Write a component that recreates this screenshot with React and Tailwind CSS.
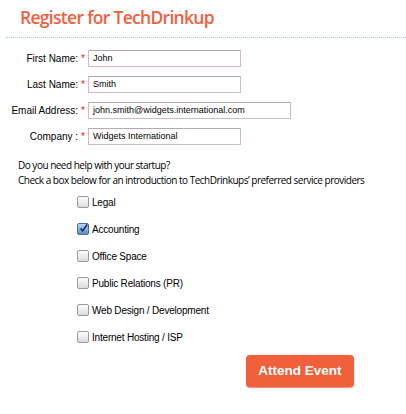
import React from "react";

const fields = [
  { label: "First Name:", value: "John", wide: false },
  { label: "Last Name:", value: "Smith", wide: false },
  { label: "Email Address:", value: "john.smith@widgets.international.com", wide: true },
  { label: "Company :", value: "Widgets International", wide: false },
];

const services = [
  { name: "Legal", checked: false },
  { name: "Accounting", checked: true },
  { name: "Office Space", checked: false },
  { name: "Public Relations (PR)", checked: false },
  { name: "Web Design / Development", checked: false },
  { name: "Internet Hosting / ISP", checked: false },
];

const Box = ({ checked }) => (
  <span
    className={`w-[12px] h-[12px] rounded-[2px] border flex items-center justify-center ${
      checked
        ? "border-[#4a6fa5] bg-gradient-to-b from-[#b9d3f0] to-[#5a8fd0]"
        : "border-[#9a9a9a] bg-gradient-to-b from-[#fdfdfd] to-[#dcdcdc]"
    }`}
  >
    {checked && (
      <svg width="11" height="11" viewBox="0 0 11 11" className="-mt-[2px] ml-[1px]">
        <path d="M2 5.5 L4.5 8.5 L10 0.5" fill="none" stroke="#1a2a4a" strokeWidth="2" />
      </svg>
    )}
  </span>
);

export default function App() {
  return (
    <div className="w-[406px] h-[414px] bg-white font-['Liberation_Sans',Arial,sans-serif] text-black">
      {/* header */}
      <div className="pl-[20px] pt-[4px] h-[37px]">
        <h1 className="font-['Open_Sans',sans-serif] text-[17.5px] font-semibold text-[#f0603f] tracking-[-0.7px] leading-[26px]">
          Register for TechDrinkup
        </h1>
      </div>
      <div className="ml-[6px] border-t border-dotted border-[#9ed6e8]"></div>

      {/* form */}
      <div className="mt-[12px] flex flex-col gap-[9px]">
        {fields.map((f) => (
          <div key={f.label} className="flex items-center h-[17px]">
            <div className="w-[88px] flex justify-end pr-[3px] text-[10px]">
              <span>{f.label}</span>
              <span className="text-[#e02020] ml-[3px]">*</span>
            </div>
            <div
              className={`h-[17px] border border-[#d8b8c0] border-t-[#b8a8b0] px-[4px] flex items-center text-[9px] ${
                f.wide ? "w-[203px]" : "w-[153px]"
              }`}
            >
              {f.value}
            </div>
          </div>
        ))}
      </div>

      {/* intro */}
      <div className="mt-[13px] pl-[18px] font-['Open_Sans',sans-serif] text-[10px] leading-[15px] tracking-[-0.5px]">
        <p>Do you need help with your startup?</p>
        <p>Check a box below for an introduction to TechDrinkups’ preferred service providers</p>
      </div>

      {/* services */}
      <div className="mt-[8px] pl-[77px] flex flex-col gap-[15px]">
        {services.map((s) => (
          <div key={s.name} className="flex items-center gap-[3px] h-[12px] text-[10px] tracking-[-0.2px]">
            <Box checked={s.checked} />
            <span>{s.name}</span>
          </div>
        ))}
      </div>

      {/* button */}
      <div className="mt-[12px] pl-[246px]">
        <button className="w-[108px] h-[32px] rounded-[4px] bg-[#f0603a] shadow-[0_1px_1px_rgba(200,60,40,0.6)] text-white font-bold text-[13.5px]">
          Attend Event
        </button>
      </div>
    </div>
  );
}
